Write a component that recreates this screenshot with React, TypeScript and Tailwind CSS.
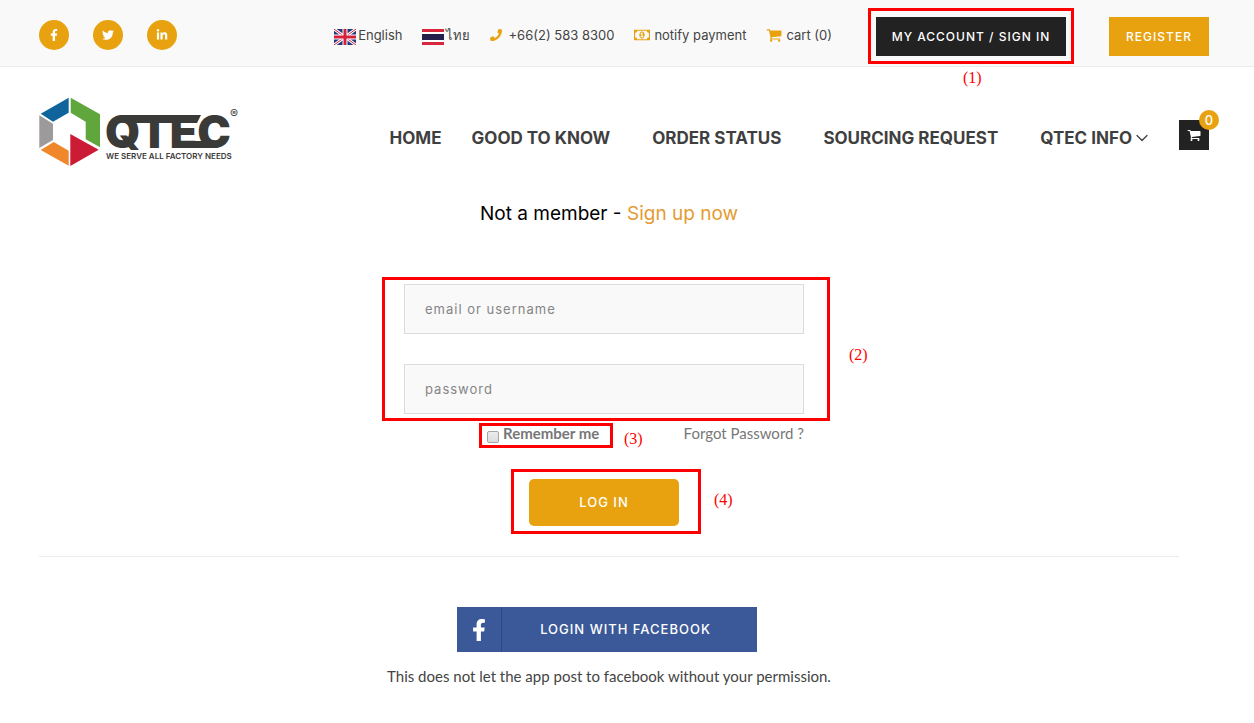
import { useState, type ReactNode } from 'react';
import { FaFacebookF, FaTwitter, FaLinkedinIn, FaPhone } from 'react-icons/fa';
import { FiChevronDown } from 'react-icons/fi';

const socials = [
  { label: 'Facebook', icon: <FaFacebookF className="w-3 h-3" /> },
  { label: 'Twitter', icon: <FaTwitter className="w-3 h-3" /> },
  { label: 'LinkedIn', icon: <FaLinkedinIn className="w-3 h-3" /> },
];

function MoneyIcon({ className }: { className: string }) {
  return (
    <svg viewBox="0 0 1920 1792" fill="currentColor" className={className} aria-hidden="true">
      <path d="M768 1152h384v-96h-128v-448h-114l-148 137 77 80q42-37 55-57h2v288h-128v96zm512-256q0 70-21 142t-59.5 134-101.5 101-138 39-138-39-101.5-101-59.5-134-21-142 21-142 59.5-134 101.5-101 138-39 138 39 101.5 101 59.5 134 21 142zm512 256v-512q-106 0-181-75t-75-181h-1152q0 106-75 181t-181 75v512q106 0 181 75t75 181h1152q0-106 75-181t181-75zm128-832v1152q0 26-19 45t-45 19h-1792q-26 0-45-19t-19-45v-1152q0-26 19-45t45-19h1792q26 0 45 19t19 45z" />
    </svg>
  );
}

function CartIcon({ className }: { className: string }) {
  return (
    <svg viewBox="0 0 1792 1792" fill="currentColor" className={className} aria-hidden="true">
      <path d="M704 1536q0 52-38 90t-90 38-90-38-38-90 38-90 90-38 90 38 38 90zm896 0q0 52-38 90t-90 38-90-38-38-90 38-90 90-38 90 38 38 90zm128-1088v512q0 24-16.5 42.5t-40.5 21.5l-1044 122q13 60 13 70 0 16-24 64h920q26 0 45 19t19 45-19 45-45 19h-1024q-26 0-45-19t-19-45q0-11 8-31.5t16-36 21.5-40 15.5-29.5l-177-823h-204q-26 0-45-19t-19-45 19-45 45-19h256q16 0 28.5 6.5t19.5 15.5 13 24.5 8 26 5.5 29.5 4.5 26h1201q26 0 45 19t19 45z" />
    </svg>
  );
}

function UkFlag() {
  return (
    <svg viewBox="0 0 22 16" className="w-[22px] h-4 mt-1 shrink-0" aria-hidden="true">
      <rect width="22" height="16" fill="#1f3a7d" />
      <path d="M0 0L22 16M22 0L0 16" stroke="#fff" strokeWidth="3" />
      <path d="M0 0L22 16M22 0L0 16" stroke="#d5203c" strokeWidth="1" />
      <path d="M11 0V16M0 8H22" stroke="#fff" strokeWidth="5" />
      <path d="M11 0V16M0 8H22" stroke="#d5203c" strokeWidth="3" />
    </svg>
  );
}

function ThaiFlag() {
  return (
    <svg viewBox="0 0 22 16" className="w-[22px] h-4 mt-1 shrink-0" aria-hidden="true">
      <rect width="22" height="16" fill="#d8273c" />
      <rect y="3" width="22" height="10" fill="#fff" />
      <rect y="5" width="22" height="6" fill="#25204b" />
    </svg>
  );
}

function Logo() {
  return (
    <svg viewBox="0 0 200 70" className="w-[200px] h-[70px]" role="img" aria-label="QTEC">
      <path d="M1.7 16.7L29.7 .7V15.7L14 24.7Z" fill="#0f659b" />
      <path d="M31.7 .7L61 17.3V50.3L46.7 42.3V24.7L31.7 15.7Z" fill="#5fa63c" />
      <path d="M.3 18.3L14 26.7V43L.3 51Z" fill="#9c9a9b" />
      <path d="M1.7 53L14.7 45L29.7 53.7V68.7Z" fill="#f0872b" />
      <path d="M31.3 37L59.7 52.7L31.3 69Z" fill="#cb1b35" />
      <g fill="#3a3a39" className="font-['Inter',sans-serif]">
        <path d="M84 18H162L158 26H84Z" />
        <path d="M143 44H176V51H143Z" />
        <text x="66" y="51" fontSize="45" fontWeight="900">QTEC</text>
        <text x="67" y="62" fontSize="8" fontWeight="600">WE SERVE ALL FACTORY NEEDS</text>
        <text x="191" y="21" fontSize="12">®</text>
      </g>
    </svg>
  );
}

/* Red callout frame with its number */
function Callout({ frame, label, children }: { frame: string; label: string; children: ReactNode }) {
  return (
    <>
      <span className={`absolute border-[3px] border-[#fe0000] pointer-events-none ${frame}`} />
      <span
        className={`absolute font-['Liberation_Serif',serif] text-base leading-5 font-normal text-[#fe0000] pointer-events-none whitespace-nowrap ${label}`}
      >
        {children}
      </span>
    </>
  );
}

function TopBar() {
  return (
    <div className="border-b border-[#ececec] bg-[#f9f9f9]">
      <div className="flex items-center justify-between h-[66px] pt-1 pl-[39px] pr-[45px]">
        <div className="flex gap-6">
          {socials.map(s => (
            <a
              key={s.label}
              href="#"
              aria-label={s.label}
              className="flex items-center justify-center w-[30px] h-[30px] rounded-full bg-[#e8a20f] text-white"
            >
              {s.icon}
            </a>
          ))}
        </div>

        <div className="flex items-center pt-[3px]">
          <nav className="flex items-center gap-5 mr-11 pb-1 text-[13px] leading-5 text-[#444] whitespace-nowrap">
            <a href="#" className="flex items-center gap-0.5"><UkFlag />English</a>
            <a href="#" className="flex items-center gap-0.5"><ThaiFlag />ไทย</a>
            <a href="#" className="flex items-center gap-1.5">
              <FaPhone className="w-3 h-3 text-[#e8a20f]" />+66(2) 583 8300
            </a>
            <a href="#" className="flex items-center gap-1">
              <MoneyIcon className="w-4 h-4 text-[#e8a20f]" />notify payment
            </a>
            <a href="#" className="flex items-center gap-1">
              <CartIcon className="w-4 h-4 text-[#e8a20f]" />cart (0)
            </a>
          </nav>

          <div className="relative mr-[43px]">
            <a
              href="#"
              className="flex items-center justify-center w-[190px] h-[39px] bg-[#222] text-white text-xs font-medium tracking-[1px] whitespace-nowrap"
            >
              MY ACCOUNT / SIGN IN
            </a>
            <Callout frame="-inset-x-2 -top-[9px] -bottom-2" label="left-[87px] top-[51px]">(1)</Callout>
          </div>
          <a
            href="#"
            className="flex items-center justify-center w-[100px] h-[39px] bg-[#e8a20f] text-white text-xs font-medium tracking-[1px]"
          >
            REGISTER
          </a>
        </div>
      </div>
    </div>
  );
}

function Header() {
  return (
    <header className="flex items-center justify-between pt-[30px] pl-[39px] pr-[45px]">
      <a href="#"><Logo /></a>
      <nav className="flex items-center gap-[42px] pt-1.5 text-[17px] leading-6 font-bold text-[#3f3f3f] whitespace-nowrap">
        <div className="flex gap-[30px] pt-1.5">
          <a href="#">HOME</a>
          <a href="#">GOOD TO KNOW</a>
        </div>
        <a href="#" className="pt-1.5">ORDER STATUS</a>
        <a href="#" className="pt-1.5">SOURCING REQUEST</a>
        <div className="flex items-center gap-[27px]">
          <a href="#" className="flex items-center pt-1.5">
            QTEC INFO <FiChevronDown className="w-5 h-5" strokeWidth={1.5} />
          </a>
          <a
            href="#"
            aria-label="Cart"
            className="relative flex items-center justify-center w-[30px] h-[30px] bg-[#222] text-white"
          >
            <CartIcon className="w-3.5 h-3.5" />
            <span className="absolute -top-2.5 -right-2.5 w-5 h-5 rounded-full bg-[#e8a20f] text-[13px] leading-5 font-medium text-center">
              0
            </span>
          </a>
        </div>
      </nav>
    </header>
  );
}

function LoginForm() {
  const [remember, setRemember] = useState(false);
  const field =
    'block w-full h-[50px] px-5 border border-[#dcdcdc] bg-[#f9f9f9] text-[13px] tracking-[1px] text-[#777] placeholder:text-[#858585] outline-none';

  return (
    <form className="w-[400px] mr-2.5" onSubmit={e => e.preventDefault()}>
      <div className="relative flex flex-col gap-[30px]">
        <input type="text" aria-label="email or username" placeholder="email or username" className={field} />
        <input type="password" aria-label="password" placeholder="password" className={field} />
        <Callout frame="-left-[22px] -right-[26px] -inset-y-[7px]" label="left-[445px] top-[61px]">(2)</Callout>
      </div>

      <div className="flex items-center justify-between mt-[9px] pl-[83px] font-['Lato',sans-serif] text-[15px] leading-5 text-[#777]">
        <label className="relative flex items-center gap-1 font-bold">
          <input
            type="checkbox"
            checked={remember}
            onChange={e => setRemember(e.target.checked)}
            className="appearance-none w-3 h-3 mt-2 rounded-xs border border-[#a5a5a5] bg-linear-to-b from-[#ececec] to-[#dcdcdc] checked:bg-[#777]"
          />
          Remember me
          <Callout frame="-left-2 -right-3.5 top-0 -bottom-[5px]" label="left-[137px] top-[6px]">(3)</Callout>
        </label>
        <a href="#">Forgot Password ?</a>
      </div>

      <div className="flex justify-center mt-9">
        <div className="relative">
          <button
            type="submit"
            className="block w-[150px] h-[47px] rounded-[5px] bg-[#e8a20f] text-white text-[13px] font-medium tracking-[1px]"
          >
            LOG IN
          </button>
          <Callout frame="-left-[18px] -right-[22px] -top-2.5 -bottom-2" label="left-[185px] top-[11px]">(4)</Callout>
        </div>
      </div>
    </form>
  );
}

export default function App() {
  return (
    <div className="min-h-screen bg-white font-['Inter','Noto_Sans',sans-serif]">
      <TopBar />
      <Header />
      <main className="flex flex-col items-center pt-[33px] pl-[39px] pr-[75px] pb-8">
        <h1 className="text-[19px] leading-7 mb-14">
          Not a member - <a href="#" className="text-[#e39b33]">Sign up now</a>
        </h1>
        <LoginForm />
        <hr className="w-full mt-[30px] mb-[50px] border-[#ececec]" />
        <button
          type="button"
          className="flex items-center w-[300px] h-[45px] mr-1 bg-[#3b5998] text-white text-[13px] font-medium tracking-[1px]"
        >
          <span className="flex items-center justify-center w-[45px] h-full border-r border-[#2f477a]">
            <FaFacebookF className="w-[22px] h-[22px]" />
          </span>
          <span className="flex-1 pr-2">LOGIN WITH FACEBOOK</span>
        </button>
        <p className="mt-3.5 font-['Lato',sans-serif] text-[15px] leading-5 text-[#444]">
          This does not let the app post to facebook without your permission.
        </p>
      </main>
    </div>
  );
}
